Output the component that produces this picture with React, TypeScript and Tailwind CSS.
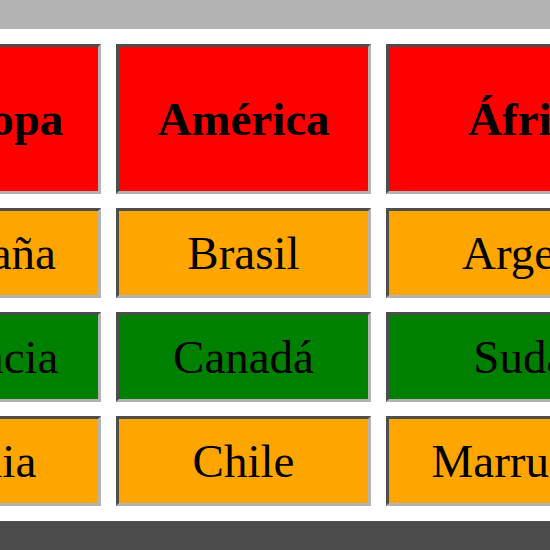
const headers = ['Europa', 'América', 'África'];

const rows: { cells: string[]; color: string }[] = [
  { cells: ['España', 'Brasil', 'Argelia'], color: 'bg-[#ffa500]' },
  { cells: ['Francia', 'Canadá', 'Sudán'], color: 'bg-[#008000]' },
  { cells: ['Italia', 'Chile', 'Marruecos'], color: 'bg-[#ffa500]' },
];

const cellBase =
  "flex items-center justify-center border-[3px] border-t-[#4d4d4d] border-l-[#4d4d4d] border-b-[#b3b3b3] border-r-[#b3b3b3] whitespace-nowrap overflow-hidden text-black";

export default function App() {
  return (
    <div className="w-[550px] h-[550px] overflow-hidden flex flex-col bg-white font-['Liberation_Serif',serif] text-[47px]">
      {/* top bar */}
      <div className="h-[29px] shrink-0 bg-[#b3b3b3]" />

      {/* table */}
      <div className="pt-[15px] pb-[15px]">
        <div className="ml-[-125px] grid grid-cols-[226px_255px_292px] grid-rows-[150px_90px_90px_90px] gap-x-[15px] gap-y-[14px]">
          {headers.map((h) => (
            <div key={h} className={`${cellBase} bg-[#ff0000] font-bold`}>
              {h}
            </div>
          ))}
          {rows.map((row) =>
            row.cells.map((c) => (
              <div key={c} className={`${cellBase} ${row.color}`}>
                {c}
              </div>
            ))
          )}
        </div>
      </div>

      {/* bottom bar */}
      <div className="flex-1 bg-[#4b4b4b]" />
    </div>
  );
}
